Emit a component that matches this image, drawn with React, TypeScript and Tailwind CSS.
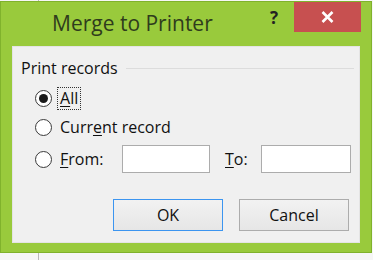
import React from "react";

const font = { fontFamily: '"Open Sans", "Noto Sans", sans-serif' };

function Radio({ checked }: { checked?: boolean }) {
  return (
    <div className="w-[17px] h-[17px] rounded-full border border-[#3a3a3a] bg-white flex items-center justify-center shrink-0">
      {checked && <div className="w-[9px] h-[9px] rounded-full bg-[#1a1a1a]" />}
    </div>
  );
}

export default function App() {
  return (
    <div className="relative w-[373px] h-[260px] bg-[#f6f6f6] pt-px" style={font}>
      <div className="absolute left-[38px] top-0 w-px h-[260px] bg-[#b8b8b8]" />
      <div className="relative w-[372px] h-[252px] bg-[#99ca3c] border border-[#80b22c] flex flex-col">
        <div className="h-[44px] flex items-start">
          <div className="pl-[51px] pt-[7px] text-[21px] leading-[28px] text-[#2f3c1c]">Merge to Printer</div>
          <div className="ml-auto pt-[4px] mr-[16px] text-[17px] font-bold leading-[24px] text-[#222]">?</div>
          <div className="w-[67px] h-[30px] bg-[#c75050] mr-[10px] flex items-center justify-center">
            <svg width="13" height="12" viewBox="0 0 13 12">
              <path d="M1.5 1 L11.5 11 M11.5 1 L1.5 11" stroke="white" strokeWidth="2.6" />
            </svg>
          </div>
        </div>
        <div className="mx-[11px] h-[197px] bg-[#f0f0f0] border border-[#e4e4e4] flex flex-col text-[16px] text-[#111]">
          <div className="mt-[11px] h-[20px] flex items-center pl-[8px] pr-[5px]">
            <span className="leading-[20px]">Print records</span>
            <div className="flex-1 h-px bg-[#dcdcdc] ml-[8px]" />
          </div>
          <div className="mt-[8px] h-[24px] flex items-center pl-[22px]">
            <Radio checked />
            <div className="ml-[5px] px-[2px] h-[23px] border border-dotted border-[#333] flex items-center leading-[20px]">
              <span><u className="underline-offset-2">A</u>ll</span>
            </div>
          </div>
          <div className="mt-[5px] h-[24px] flex items-center pl-[22px]">
            <Radio />
            <span className="ml-[8px] leading-[20px]">Curr<u className="underline-offset-2">e</u>nt record</span>
          </div>
          <div className="mt-[6px] h-[28px] flex items-center pl-[22px]">
            <Radio />
            <span className="ml-[8px] w-[62px] leading-[20px]"><u className="underline-offset-2">F</u>rom:</span>
            <div className="w-[88px] h-[28px] bg-white border border-[#acacac]" />
            <span className="ml-[15px] w-[36px] leading-[20px]"><u className="underline-offset-2">T</u>o:</span>
            <div className="w-[90px] h-[28px] bg-white border border-[#acacac]" />
          </div>
          <div className="mt-[26px] flex justify-end pr-[10px] gap-[16px]">
            <div className="w-[110px] h-[32px] border border-[#3c95f0] bg-gradient-to-b from-[#f2f2f2] to-[#e6e6e6] flex items-center justify-center">
              <span>OK</span>
            </div>
            <div className="w-[110px] h-[32px] border border-[#acacac] bg-gradient-to-b from-[#f2f2f2] to-[#e6e6e6] flex items-center justify-center">
              <span>Cancel</span>
            </div>
          </div>
        </div>
      </div>
    </div>
  );
}
